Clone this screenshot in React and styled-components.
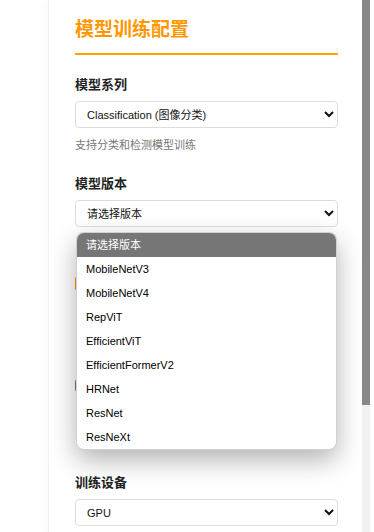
import React from "react";
import styled, { createGlobalStyle } from "styled-components";

const Global = createGlobalStyle`
  html, body { margin: 0; padding: 0; background: #fff; }
  body { font-family: "Liberation Sans", "Noto Sans CJK SC", sans-serif; }
  * { box-sizing: border-box; }
`;

const Page = styled.div`
  display: flex;
  height: 532px;
  padding-left: 48px;
  background: #fff;
`;

const Panel = styled.aside`
  display: flex;
  width: 322px;
  height: 532px;
  border-left: 1px solid #f1f1f1;
  box-shadow: -3px 0 8px rgba(0, 0, 0, 0.03);
  background: #fff;
`;

const Content = styled.div`
  flex: 1;
  min-width: 0;
  height: 532px;
  overflow: hidden;
  padding: 17px 24px 46px 26px;
`;

const ScrollTrack = styled.div`
  width: 8px;
  flex: none;
  background: #f1f1f1;
`;

const ScrollThumb = styled.div`
  height: 405px;
  background: #888;
`;

const Title = styled.h2`
  margin: 0 0 20px;
  font-size: 19px;
  line-height: 25px;
  font-weight: 700;
  color: #ff9800;
  padding-bottom: 11px;
  border-bottom: 2px solid #ffa500;
`;

const Group = styled.div`
  position: relative;
  margin-bottom: ${(p) => p.$gap || 20}px;
`;

const Label = styled.label`
  display: block;
  font-size: 13px;
  line-height: 20px;
  font-weight: 700;
  color: #222;
  margin-bottom: 6px;
`;

const SelectWrap = styled.div`
  position: relative;
`;

const Select = styled.select`
  display: block;
  width: 100%;
  height: 27px;
  padding: 0 7px;
  font-family: "Liberation Sans", "Noto Sans CJK SC", sans-serif;
  font-size: 11px;
  color: #111;
  background: #fff;
  border: 1px solid #ddd;
  border-radius: 4px;
  outline: none;
`;

const Input = styled.input`
  display: block;
  width: 100%;
  height: 26px;
  padding: 0 10px;
  font-family: "Liberation Sans", "Noto Sans CJK SC", sans-serif;
  font-size: 11px;
  border: 1px solid #ddd;
  border-radius: 4px;
`;

const Hint = styled.div`
  margin-top: 8px;
  padding-left: ${(p) => (p.$indent ? "19px" : "0")};
  font-size: 11px;
  line-height: 18px;
  color: #777;
`;

const CheckRow = styled.label`
  display: flex;
  align-items: center;
  gap: 6px;
  font-size: 13px;
  line-height: 20px;
  font-weight: 700;
  color: #222;
  input {
    margin: 0;
    width: 13px;
    height: 13px;
    accent-color: #ff9800;
  }
`;

const Popup = styled.ul`
  position: absolute;
  top: calc(100% + 5px);
  left: 1px;
  right: 1px;
  margin: 0;
  padding: 0;
  list-style: none;
  background: #fff;
  border-radius: 8px;
  overflow: hidden;
  border: 1px solid rgba(0, 0, 0, 0.18);
  box-shadow: 0 10px 26px rgba(0, 0, 0, 0.3);
  z-index: 10;
`;

const Option = styled.li`
  height: 24px;
  line-height: 24px;
  padding: 0 9px;
  font-size: 11px;
  color: ${(p) => (p.$active ? "#fff" : "#000")};
  background: ${(p) => (p.$active ? "#767676" : "transparent")};
`;

const versions = [
  "MobileNetV3",
  "MobileNetV4",
  "RepViT",
  "EfficientViT",
  "EfficientFormerV2",
  "HRNet",
  "ResNet",
  "ResNeXt",
];

export default function App() {
  return (
    <>
      <Global />
      <Page>
        <Panel>
          <Content>
            <Title>模型训练配置</Title>

            <Group>
              <Label>模型系列</Label>
              <Select defaultValue="cls">
                <option value="cls">Classification (图像分类)</option>
                <option value="det">Detection (目标检测)</option>
              </Select>
              <Hint>支持分类和检测模型训练</Hint>
            </Group>

            <Group>
              <Label>模型版本</Label>
              <SelectWrap>
                <Select defaultValue="">
                  <option value="">请选择版本</option>
                  {versions.map((v) => (
                    <option key={v} value={v}>{v}</option>
                  ))}
                </Select>
                <Popup>
                  <Option $active>请选择版本</Option>
                  {versions.map((v) => (
                    <Option key={v}>{v}</Option>
                  ))}
                </Popup>
              </SelectWrap>
              <Hint $indent>请根据任务选择具体的模型版本</Hint>
            </Group>

            <Group>
              <CheckRow>
                <input type="checkbox" defaultChecked />
                使用预训练权重
              </CheckRow>
              <Hint $indent>
                加载 ImageNet 预训练权重以加快模型收敛速度，并提升小数据集上的训练效果，推荐在大多数场景下保持开启状态以获得更好结果
              </Hint>
            </Group>

            <Group $gap={34}>
              <CheckRow>
                <input type="checkbox" />
                启用数据增强
              </CheckRow>
              <Hint $indent>随机翻转、裁剪与颜色抖动，可以有效缓解过拟合问题</Hint>
            </Group>

            <Group>
              <Label>训练设备</Label>
              <Select defaultValue="gpu">
                <option value="gpu">GPU</option>
                <option value="cpu">CPU</option>
              </Select>
              <Hint>推荐使用 GPU 进行训练</Hint>
            </Group>

            <Group>
              <Label>训练轮数 (Epochs)</Label>
              <Input defaultValue="100" />
              <Hint>建议设置为 50-300 轮</Hint>
            </Group>
          </Content>
          <ScrollTrack>
            <ScrollThumb />
          </ScrollTrack>
        </Panel>
      </Page>
    </>
  );
}
